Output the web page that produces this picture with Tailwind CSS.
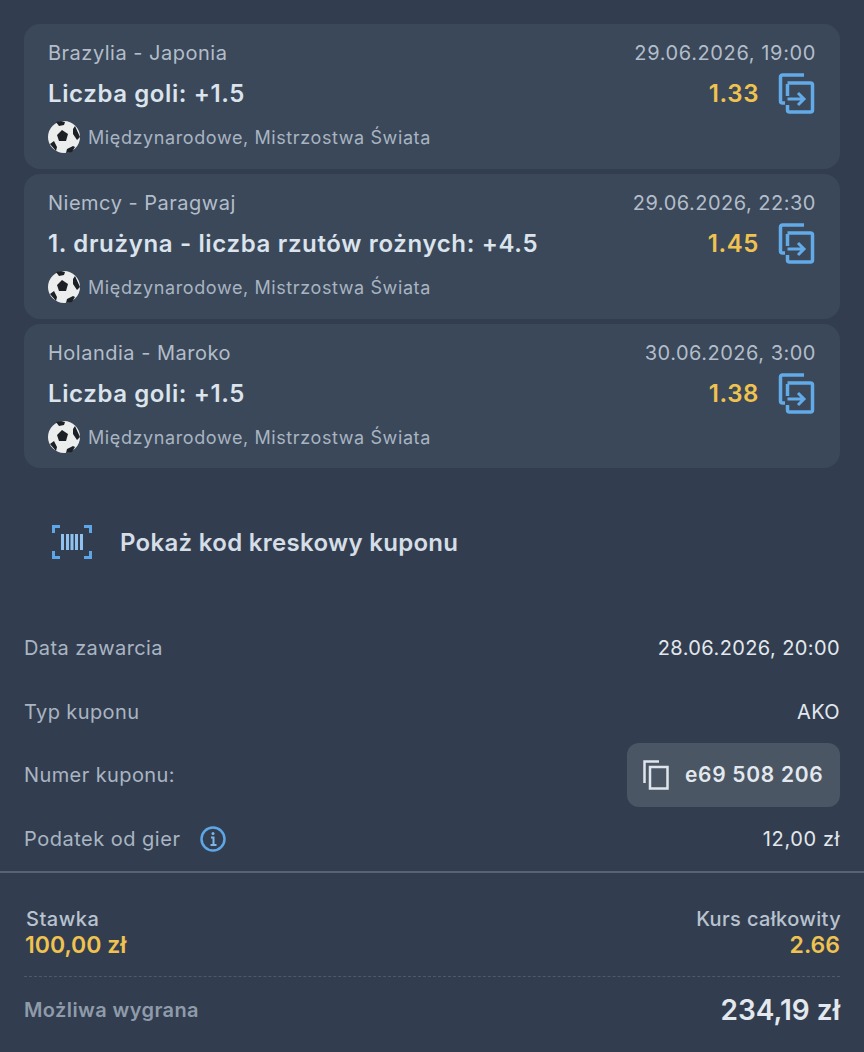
<!DOCTYPE html>
<html lang="pl">
<head>
    <meta charset="UTF-8">
    <meta name="viewport" content="width=device-width, initial-scale=1.0">
    <title>Kupon</title>
    <script src="https://cdn.jsdelivr.net/npm/@tailwindcss/browser@4"></script>
</head>
<body class="bg-[#323e4f] font-['Inter',sans-serif] overflow-hidden">
    <div class="w-[864px] h-[1052px] overflow-hidden">
        <!-- Selections -->
        <div class="px-6 pt-6 flex flex-col gap-[5px]">
            <div class="bg-[#3a4859] rounded-2xl h-[145px] pl-6 pr-6 pt-[16px]">
                <div class="flex justify-between items-center h-[26px] text-[20px] tracking-[0.5px] text-[#b3bdca]">
                    <span>Brazylia - Japonia</span>
                    <span class="tracking-[0.62px]">29.06.2026, 19:00</span>
                </div>
                <div class="flex justify-between items-center h-[38px] mt-[9px]">
                    <span class="text-[24px] tracking-[0.6px] font-semibold text-[#dbe3ec]">Liczba goli: +1.5</span>
                    <div class="flex items-center gap-[19px]">
                        <span class="text-[24px] tracking-[0.6px] font-semibold text-[#f0c24f]">1.33</span>
                        <svg width="38" height="42" viewBox="0 0 38 42" fill="none" stroke="#63aae8" stroke-width="3.500"><path d="M26 2H4.500a2 2 0 0 0-2 2V28a2 2 0 0 0 2 2H7"/><path d="M9.500 11V23M9.500 10h23a2 2 0 0 1 2 2V37a2 2 0 0 1-2 2H11.500a2 2 0 0 1-2-2v-5"/><path d="M9.500 26H26M20 20l6 6-6 6" stroke-width="3"/></svg>
                    </div>
                </div>
                <div class="flex items-center gap-2 mt-[8px]">
                    <svg width="32" height="32" viewBox="0 0 32 32"><circle cx="16" cy="16" r="16" fill="#eceded"/><path d="M14 9l6 4-2 7h-7l-2-6zM27 5l5 11-3 3-4-6 0-5zM8 1l5-1 4 1-1 3-5 1zM2 23l4-3 3 6-1 4zM18 32l1-4 6-3 2 1-3 5z" fill="#1d2126"/></svg>
                    <span class="text-[18px] tracking-[0.6px] text-[#a9b4c2]">Międzynarodowe, Mistrzostwa Świata</span>
                </div>
            </div>

            <div class="bg-[#3a4859] rounded-2xl h-[145px] pl-6 pr-6 pt-[16px]">
                <div class="flex justify-between items-center h-[26px] text-[20px] tracking-[0.5px] text-[#b3bdca]">
                    <span>Niemcy - Paragwaj</span>
                    <span>29.06.2026, 22:30</span>
                </div>
                <div class="flex justify-between items-center h-[38px] mt-[9px]">
                    <span class="text-[24px] tracking-[0.65px] font-semibold text-[#dbe3ec]">1. drużyna - liczba rzutów rożnych: +4.5</span>
                    <div class="flex items-center gap-[19px]">
                        <span class="text-[24px] tracking-[0.6px] font-semibold text-[#f0c24f]">1.45</span>
                        <svg width="38" height="42" viewBox="0 0 38 42" fill="none" stroke="#63aae8" stroke-width="3.500"><path d="M26 2H4.500a2 2 0 0 0-2 2V28a2 2 0 0 0 2 2H7"/><path d="M9.500 11V23M9.500 10h23a2 2 0 0 1 2 2V37a2 2 0 0 1-2 2H11.500a2 2 0 0 1-2-2v-5"/><path d="M9.500 26H26M20 20l6 6-6 6" stroke-width="3"/></svg>
                    </div>
                </div>
                <div class="flex items-center gap-2 mt-[8px]">
                    <svg width="32" height="32" viewBox="0 0 32 32"><circle cx="16" cy="16" r="16" fill="#eceded"/><path d="M14 9l6 4-2 7h-7l-2-6zM27 5l5 11-3 3-4-6 0-5zM8 1l5-1 4 1-1 3-5 1zM2 23l4-3 3 6-1 4zM18 32l1-4 6-3 2 1-3 5z" fill="#1d2126"/></svg>
                    <span class="text-[18px] tracking-[0.6px] text-[#a9b4c2]">Międzynarodowe, Mistrzostwa Świata</span>
                </div>
            </div>

            <div class="bg-[#3a4859] rounded-2xl h-[144px] pl-6 pr-6 pt-[16px]">
                <div class="flex justify-between items-center h-[26px] text-[20px] tracking-[0.5px] text-[#b3bdca]">
                    <span>Holandia - Maroko</span>
                    <span>30.06.2026, 3:00</span>
                </div>
                <div class="flex justify-between items-center h-[38px] mt-[9px]">
                    <span class="text-[24px] tracking-[0.6px] font-semibold text-[#dbe3ec]">Liczba goli: +1.5</span>
                    <div class="flex items-center gap-[19px]">
                        <span class="text-[24px] tracking-[0.6px] font-semibold text-[#f0c24f]">1.38</span>
                        <svg width="38" height="42" viewBox="0 0 38 42" fill="none" stroke="#63aae8" stroke-width="3.500"><path d="M26 2H4.500a2 2 0 0 0-2 2V28a2 2 0 0 0 2 2H7"/><path d="M9.500 11V23M9.500 10h23a2 2 0 0 1 2 2V37a2 2 0 0 1-2 2H11.500a2 2 0 0 1-2-2v-5"/><path d="M9.500 26H26M20 20l6 6-6 6" stroke-width="3"/></svg>
                    </div>
                </div>
                <div class="flex items-center gap-2 mt-[8px]">
                    <svg width="32" height="32" viewBox="0 0 32 32"><circle cx="16" cy="16" r="16" fill="#eceded"/><path d="M14 9l6 4-2 7h-7l-2-6zM27 5l5 11-3 3-4-6 0-5zM8 1l5-1 4 1-1 3-5 1zM2 23l4-3 3 6-1 4zM18 32l1-4 6-3 2 1-3 5z" fill="#1d2126"/></svg>
                    <span class="text-[18px] tracking-[0.6px] text-[#a9b4c2]">Międzynarodowe, Mistrzostwa Świata</span>
                </div>
            </div>
        </div>

        <!-- Barcode -->
        <div class="flex items-center gap-[28px] pl-[52px] h-[148px]">
            <svg width="40" height="34" viewBox="0 0 40 34" fill="none" stroke="#5ea6e6" stroke-width="3"><path d="M8 1.500H1.500V8M32 1.500h6.500V8M8 32.500H1.500V26M32 32.500h6.500V26"/><path d="M10.500 9v16M15.500 9v16M20 9v16M24.500 9v16M29.500 9v16" stroke="#8fc2ee"/></svg>
            <span class="text-[24px] tracking-[0.3px] font-semibold text-[#d5dde6] relative top-[1px]">Pokaż kod kreskowy kuponu</span>
        </div>

        <!-- Details -->
        <div class="px-6 text-[20px] tracking-[0.4px]">
            <div class="flex justify-between items-center h-[64px] text-[#aab5c3]">
                <span>Data zawarcia</span>
                <span class="text-[#e3e8ee]">28.06.2026, 20:00</span>
            </div>
            <div class="flex justify-between items-center h-[63px] text-[#aab5c3]">
                <span>Typ kuponu</span>
                <span class="text-[#e3e8ee]">AKO</span>
            </div>
            <div class="flex justify-between items-center h-[64px] text-[#aab5c3]">
                <span>Numer kuponu:</span>
                <div class="flex items-center gap-[16px] w-[213px] h-[64px] pl-[16px] bg-[#4a5664] rounded-xl">
                    <svg width="26" height="30" viewBox="0 0 26 30" fill="none" stroke="#dfe5ec" stroke-width="2.500"><path d="M16 1.500H1.500V23"/><path d="M7 7h17.500v21.500H7z"/></svg>
                    <span class="text-[21px] font-semibold tracking-[0.7px] text-[#e3e8ee]">e69 508 206</span>
                </div>
            </div>
            <div class="flex justify-between items-center h-[64px] text-[#aab5c3]">
                <div class="flex items-center gap-[20px]">
                    <span class="tracking-[0.5px]">Podatek od gier</span>
                    <svg width="26" height="26" viewBox="0 0 26 26" fill="none"><circle cx="13" cy="13" r="11.500" stroke="#5ea6e6" stroke-width="2.500"/><path d="M11 11.500h2.500V19M10.500 19h6" stroke="#7db6ea" stroke-width="2"/><circle cx="13" cy="7.500" r="1.500" fill="#7db6ea"/></svg>
                </div>
                <span class="text-[#e3e8ee] tracking-[0.6px]">12,00 zł</span>
            </div>
        </div>

        <div class="border-t-2 border-[#566476]"></div>

        <!-- Summary -->
        <div class="px-6">
            <div class="flex justify-between items-start pt-[34px] h-[104px] border-b border-dashed border-[#4c5a6b]">
                <div class="flex flex-col pl-[1px]">
                    <span class="text-[20px] leading-[24px] tracking-[0.5px] font-medium text-[#b9c3cf] pl-[1px]">Stawka</span>
                    <span class="text-[23px] leading-[28px] font-semibold text-[#f0c24f]">100,00 zł</span>
                </div>
                <div class="flex flex-col items-end">
                    <span class="text-[20px] leading-[24px] tracking-[0.35px] font-medium text-[#b9c3cf] relative left-[1px]">Kurs całkowity</span>
                    <span class="text-[23px] leading-[28px] font-semibold text-[#f0c24f]">2.66</span>
                </div>
            </div>
            <div class="flex justify-between items-center h-[66px]">
                <span class="text-[20px] tracking-[0.4px] font-semibold text-[#8f9baa]">Możliwa wygrana</span>
                <span class="text-[28px] font-semibold text-[#e3e8ee]">234,19 zł</span>
            </div>
        </div>
    </div>
</body>
</html>
